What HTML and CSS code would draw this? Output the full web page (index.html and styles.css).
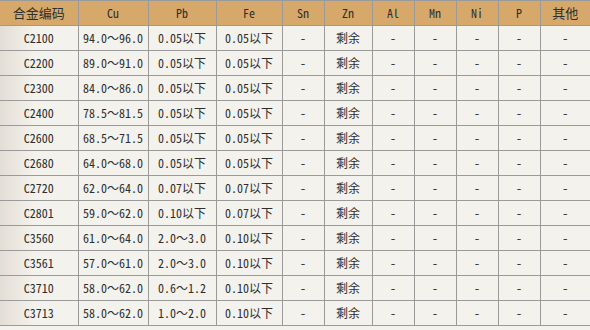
FILE: index.html
```html
<!DOCTYPE html>
<html lang="zh">
<head>
<meta charset="utf-8">
<link rel="stylesheet" href="styles.css">
</head>
<body>
<table class="alloy">
  <colgroup>
    <col class="c1"><col class="c2"><col class="c3"><col class="c4"><col class="c5"><col class="c6"><col class="c7"><col class="c8"><col class="c9"><col class="c10"><col class="c11">
  </colgroup>
  <thead>
    <tr><th class="first cjk">合金编码</th><th>Cu</th><th>Pb</th><th>Fe</th><th>Sn</th><th>Zn</th><th>Al</th><th>Mn</th><th>Ni</th><th>P</th><th class="cjk">其他</th></tr>
  </thead>
  <tbody>
    <tr><td class="first">C2100</td><td>94.0～96.0</td><td>0.05以下</td><td>0.05以下</td><td>-</td><td>剩余</td><td>-</td><td>-</td><td>-</td><td>-</td><td>-</td></tr>
    <tr><td class="first">C2200</td><td>89.0～91.0</td><td>0.05以下</td><td>0.05以下</td><td>-</td><td>剩余</td><td>-</td><td>-</td><td>-</td><td>-</td><td>-</td></tr>
    <tr><td class="first">C2300</td><td>84.0～86.0</td><td>0.05以下</td><td>0.05以下</td><td>-</td><td>剩余</td><td>-</td><td>-</td><td>-</td><td>-</td><td>-</td></tr>
    <tr><td class="first">C2400</td><td>78.5～81.5</td><td>0.05以下</td><td>0.05以下</td><td>-</td><td>剩余</td><td>-</td><td>-</td><td>-</td><td>-</td><td>-</td></tr>
    <tr><td class="first">C2600</td><td>68.5～71.5</td><td>0.05以下</td><td>0.05以下</td><td>-</td><td>剩余</td><td>-</td><td>-</td><td>-</td><td>-</td><td>-</td></tr>
    <tr><td class="first">C2680</td><td>64.0～68.0</td><td>0.05以下</td><td>0.05以下</td><td>-</td><td>剩余</td><td>-</td><td>-</td><td>-</td><td>-</td><td>-</td></tr>
    <tr><td class="first">C2720</td><td>62.0～64.0</td><td>0.07以下</td><td>0.07以下</td><td>-</td><td>剩余</td><td>-</td><td>-</td><td>-</td><td>-</td><td>-</td></tr>
    <tr><td class="first">C2801</td><td>59.0～62.0</td><td>0.10以下</td><td>0.07以下</td><td>-</td><td>剩余</td><td>-</td><td>-</td><td>-</td><td>-</td><td>-</td></tr>
    <tr><td class="first">C3560</td><td>61.0～64.0</td><td>2.0～3.0</td><td>0.10以下</td><td>-</td><td>剩余</td><td>-</td><td>-</td><td>-</td><td>-</td><td>-</td></tr>
    <tr><td class="first">C3561</td><td>57.0～61.0</td><td>2.0～3.0</td><td>0.10以下</td><td>-</td><td>剩余</td><td>-</td><td>-</td><td>-</td><td>-</td><td>-</td></tr>
    <tr><td class="first">C3710</td><td>58.0～62.0</td><td>0.6～1.2</td><td>0.10以下</td><td>-</td><td>剩余</td><td>-</td><td>-</td><td>-</td><td>-</td><td>-</td></tr>
    <tr><td class="first">C3713</td><td>58.0～62.0</td><td>1.0～2.0</td><td>0.10以下</td><td>-</td><td>剩余</td><td>-</td><td>-</td><td>-</td><td>-</td><td>-</td></tr>
  </tbody>
</table>
</body>
</html>
```

FILE: styles.css
```css
html, body {
  margin: 0;
  padding: 0;
  background: #f4f2ec;
}

.alloy {
  width: 590px;
  table-layout: fixed;
  border-collapse: collapse;
  font-family: "Noto Sans Mono CJK SC", "Liberation Mono", "Noto Sans CJK SC", monospace;
  font-size: 12px;
  color: #2e2e2e;
}

.c1 { width: 78px; }
.c2 { width: 70px; }
.c3 { width: 68px; }
.c4 { width: 66px; }
.c5 { width: 42px; }
.c6 { width: 48px; }
.c7 { width: 42px; }
.c8 { width: 42px; }
.c9 { width: 42px; }
.c10 { width: 42px; }
.c11 { width: 50px; }

.alloy th,
.alloy td {
  border: 1px solid #9a9a9a;
  padding: 0;
  height: 24px;
  text-align: center;
  vertical-align: middle;
  white-space: nowrap;
  line-height: 14px;
}

.alloy th {
  background: #d6a96b;
  font-weight: normal;
}

.alloy td {
  background: #f4f2ec;
}

.alloy th.cjk {
  font-size: 13px;
}

.alloy .first {
  border-left: none;
}

.alloy td.first {
  background: linear-gradient(to right, #e2ded6, #f4f2ec 45%);
}

.alloy tr > :last-child {
  border-right: none;
}
```
